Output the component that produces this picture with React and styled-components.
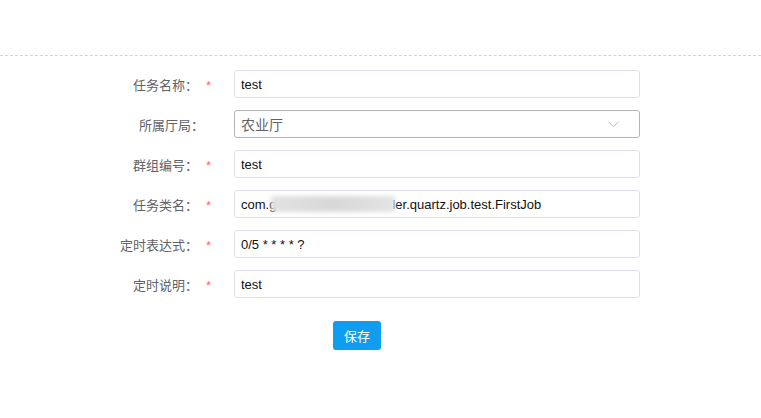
import React from "react";
import styled, { createGlobalStyle } from "styled-components";

const GlobalStyle = createGlobalStyle`
  body {
    margin: 0;
    background: #fff;
    font-family: "Liberation Sans", "Noto Sans CJK SC", sans-serif;
  }
`;

const fields = [
  { label: "任务名称：", value: "test", required: true },
  { label: "所属厅局：", value: "农业厅", select: true },
  { label: "群组编号：", value: "test", required: true },
  { label: "任务类名：", value: "class", required: true },
  { label: "定时表达式：", value: "0/5 * * * * ?", required: true },
  { label: "定时说明：", value: "test", required: true },
];

const App = () => {
  return (
    <Page>
      <GlobalStyle />
      <Divider />
      <Form>
        {fields.map((f) => (
          <Row key={f.label}>
            <Label $required={f.required}>
              {f.label}
              {f.required && <Star>*</Star>}
            </Label>
            {f.select ? (
              <Select>
                <SelectText>{f.value}</SelectText>
                <svg width="11" height="7" viewBox="0 0 11 7">
                  <path
                    d="M0.5 0.8 L5.5 5.6 L10.5 0.8"
                    fill="none"
                    stroke="#b8bcc4"
                    strokeWidth="1"
                  />
                </svg>
              </Select>
            ) : (
              <Input>
                {f.value === "class" ? (
                  <>
                    com.g
                    <Blur />
                    ler.quartz.job.test.FirstJob
                  </>
                ) : (
                  f.value
                )}
              </Input>
            )}
          </Row>
        ))}
        <Actions>
          <SaveButton>保存</SaveButton>
        </Actions>
      </Form>
    </Page>
  );
};

export default App;

const Page = styled.div`
  width: 761px;
  height: 418px;
  padding-top: 55px;
  box-sizing: border-box;
  overflow: hidden;
`;

const Divider = styled.div`
  border-top: 1px dashed #d4d4d4;
`;

const Form = styled.div`
  display: flex;
  flex-direction: column;
  gap: 12px;
  padding: 14px 0 0 112px;
`;

const Row = styled.div`
  display: grid;
  grid-template-columns: 122px 406px;
  align-items: center;
  height: 28px;
`;

const Label = styled.div`
  text-align: right;
  padding-right: ${(p) => (p.$required ? "23px" : "30px")};
  font-family: "Noto Sans CJK SC", sans-serif;
  font-size: 13px;
  color: #606266;
  white-space: nowrap;
`;

const Star = styled.span`
  display: inline-block;
  width: 6px;
  margin-left: 7px;
  color: #f56c6c;
  font-family: "Liberation Sans", sans-serif;
`;

const Input = styled.div`
  height: 28px;
  box-sizing: border-box;
  border: 1px solid #dcdfe6;
  border-radius: 3px;
  padding: 0 6px;
  display: flex;
  align-items: center;
  font-size: 13px;
  color: #111;
  white-space: nowrap;
  overflow: hidden;
`;

const Blur = styled.span`
  display: inline-block;
  position: relative;
  z-index: 1;
  width: 124px;
  height: 16px;
  margin: 0 -3px 0 -5px;
  background: linear-gradient(90deg, #e2e2e2, #d8d8d8 50%, #e4e4e4);
  filter: blur(2px);
`;

const Select = styled.div`
  height: 28px;
  box-sizing: border-box;
  border: 1px solid #b4b4b4;
  border-radius: 3px;
  padding: 0 20px 0 6px;
  display: flex;
  align-items: center;
  justify-content: space-between;
`;

const SelectText = styled.span`
  font-family: "Noto Sans CJK SC", sans-serif;
  font-size: 14px;
  color: #606266;
`;

const Actions = styled.div`
  padding: 11px 0 0 221px;
`;

const SaveButton = styled.button`
  width: 48px;
  height: 29px;
  border: none;
  border-radius: 3px;
  background: #109cf1;
  color: #fff;
  font-family: "Noto Sans CJK SC", sans-serif;
  font-size: 13px;
  padding: 0;
  cursor: pointer;
`;
